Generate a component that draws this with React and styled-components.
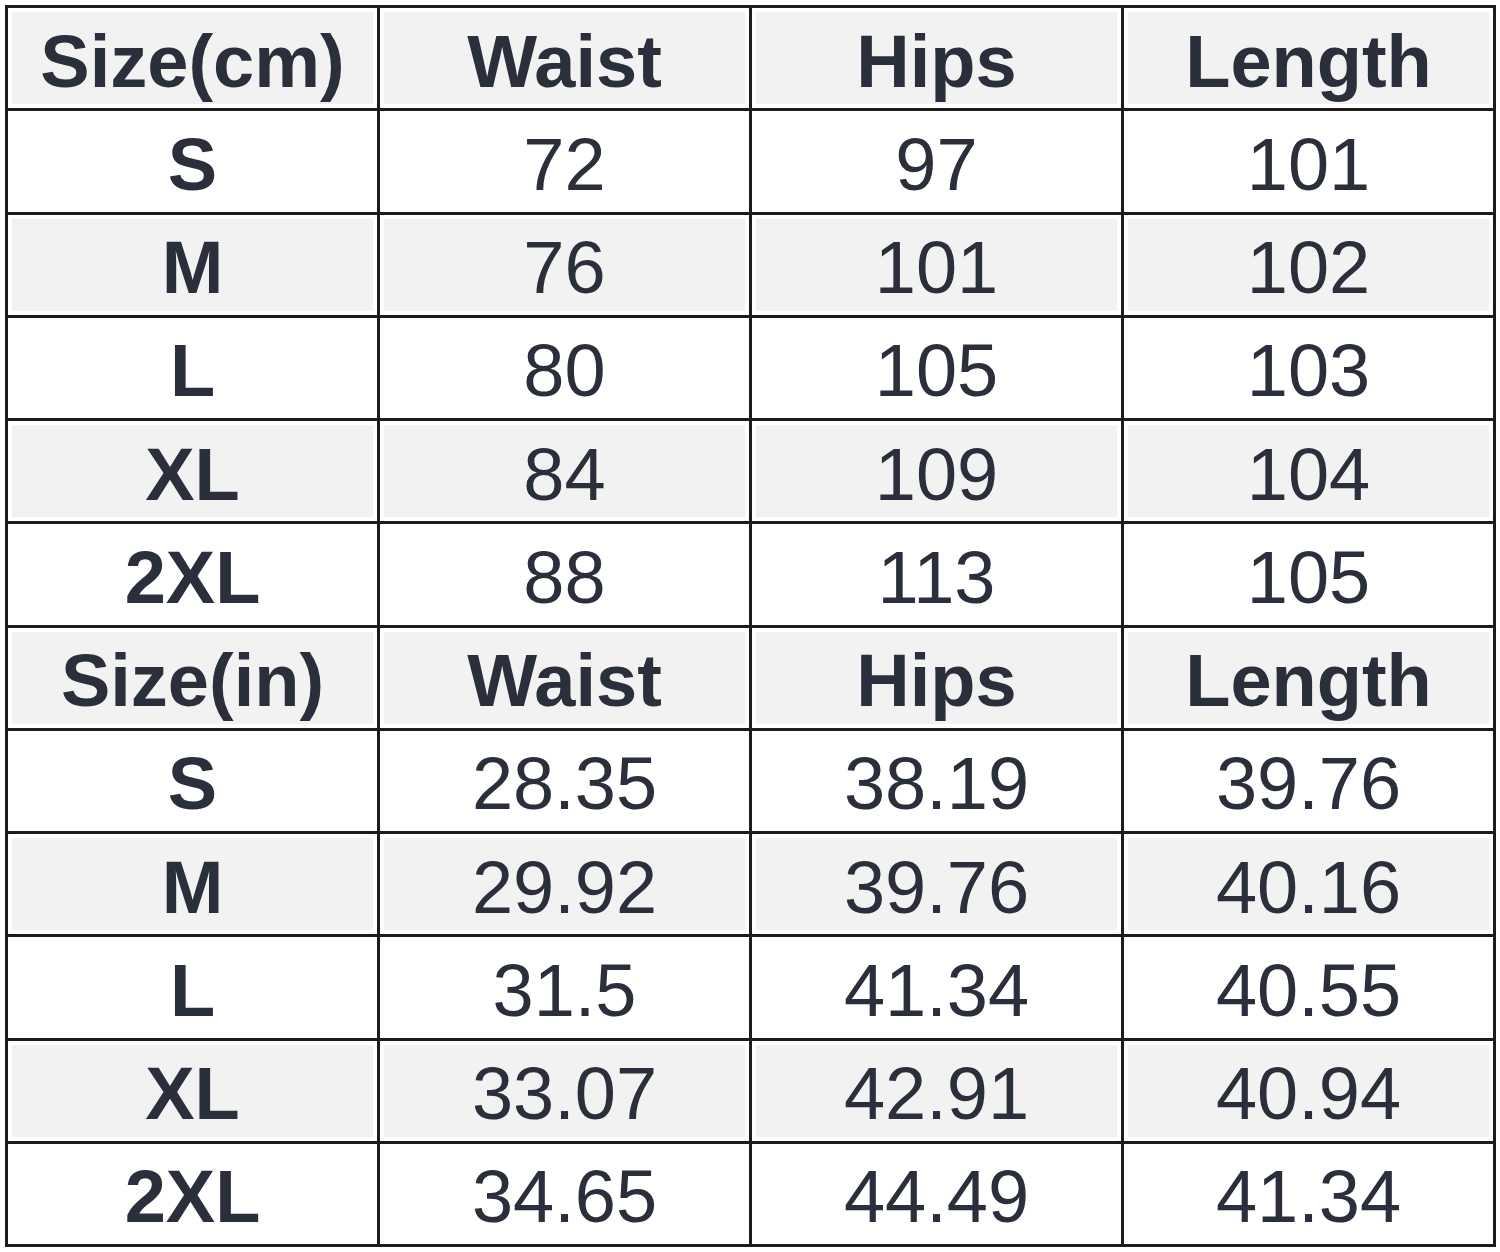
import React from "react";
import styled, { createGlobalStyle } from "styled-components";

const Global = createGlobalStyle`
  html, body { margin: 0; padding: 0; background: #fff; }
  body { font-family: "Liberation Sans", Arial, sans-serif; }
`;

const Page = styled.div`
  padding: 5px 0 0 5px;
  width: 1500px;
  height: 1252px;
  box-sizing: border-box;
`;

const Grid = styled.div`
  width: 1491px;
  height: 1242px;
  box-sizing: border-box;
  display: grid;
  grid-template-columns: repeat(4, 1fr);
  grid-template-rows: repeat(12, 1fr);
  gap: 3px;
  padding: 3px;
  background: #1c1c1c;
`;

const Cell = styled.div`
  display: flex;
  align-items: center;
  justify-content: center;
  background: ${(p) => (p.$shade ? "#f2f2f2" : "#ffffff")};
  box-shadow: ${(p) => (p.$shade ? "inset 0 0 0 4px #ffffff" : "none")};
  color: #2b2f3c;
  font-size: 74px;
  font-weight: ${(p) => (p.$bold ? 700 : 400)};
  padding-top: 6px;
  box-sizing: border-box;
`;

const cm = [
  ["S", "72", "97", "101"],
  ["M", "76", "101", "102"],
  ["L", "80", "105", "103"],
  ["XL", "84", "109", "104"],
  ["2XL", "88", "113", "105"],
];
const inch = [
  ["S", "28.35", "38.19", "39.76"],
  ["M", "29.92", "39.76", "40.16"],
  ["L", "31.5", "41.34", "40.55"],
  ["XL", "33.07", "42.91", "40.94"],
  ["2XL", "34.65", "44.49", "41.34"],
];

function Section({ unit, rows }) {
  return (
    <>
      {[unit, "Waist", "Hips", "Length"].map((h) => (
        <Cell key={h} $shade $bold>
          {h}
        </Cell>
      ))}
      {rows.map((r, i) =>
        r.map((v, j) => (
          <Cell key={i + "-" + j} $shade={i % 2 === 1} $bold={j === 0}>
            {v}
          </Cell>
        ))
      )}
    </>
  );
}

export default function App() {
  return (
    <>
      <Global />
      <Page>
        <Grid>
          <Section unit="Size(cm)" rows={cm} />
          <Section unit="Size(in)" rows={inch} />
        </Grid>
      </Page>
    </>
  );
}
